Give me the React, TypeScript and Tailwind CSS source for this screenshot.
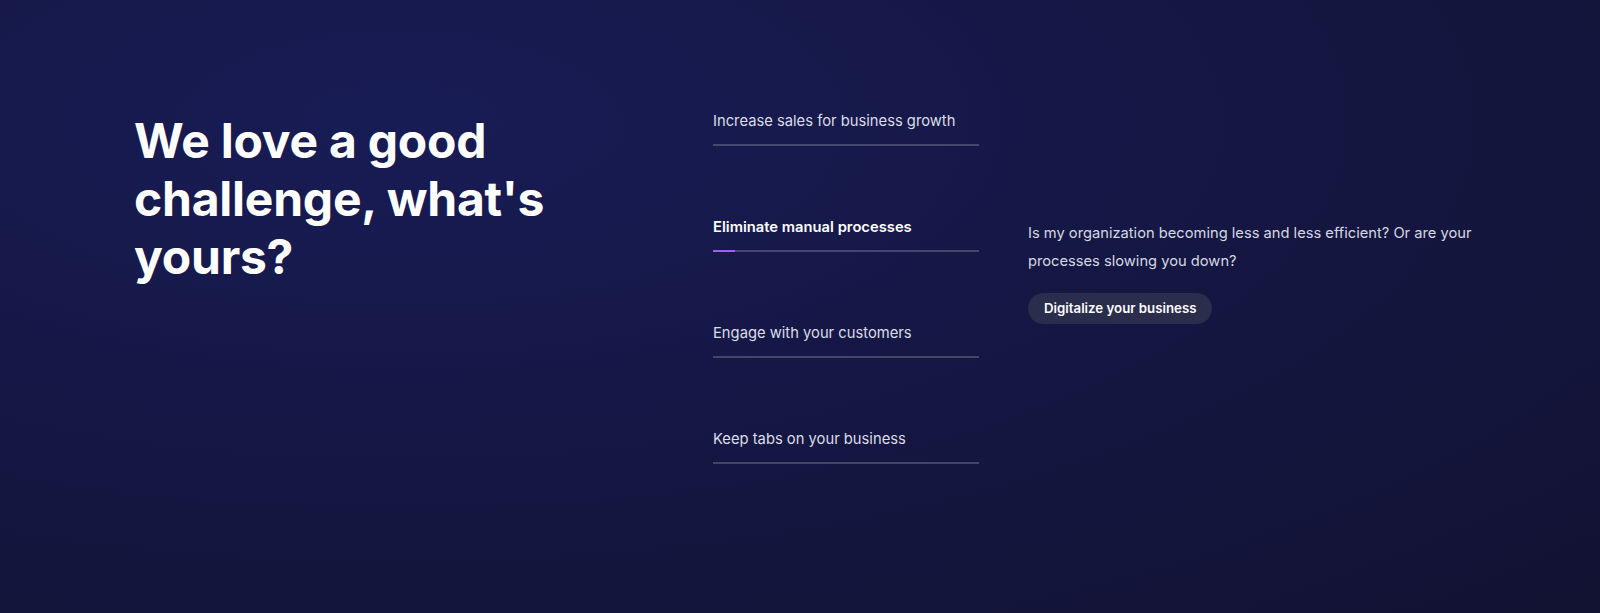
const tabs = [
  "Increase sales for business growth",
  "Eliminate manual processes",
  "Engage with your customers",
  "Keep tabs on your business",
];

const ACTIVE = 1;

export default function App() {
  return (
    <div className="h-[613px] w-full overflow-hidden bg-[radial-gradient(ellipse_at_25%_20%,#181c55_0%,#151846_40%,#121232_100%)] font-['Inter',sans-serif] text-white">
      <div className="flex items-start pl-[134px]">
        <h1 className="w-[579px] shrink-0 pt-[112px] text-[48px] font-bold leading-[58px] tracking-[-0.005em]">
          We love a good
          <br />
          challenge, what's
          <br />
          yours?
        </h1>

        <div className="flex w-[266px] shrink-0 flex-col gap-[69px] pt-[109px]">
          {tabs.map((t, i) => (
            <div key={t} className="flex flex-col">
              <span
                className={
                  i === ACTIVE
                    ? "text-[14.75px] font-semibold leading-6 text-white"
                    : "text-[14.75px] leading-6 text-[#dcdde8]"
                }
              >
                {t}
              </span>
              <div className="relative mt-[11px] h-[2px] bg-white/20">
                {i === ACTIVE && <div className="absolute left-0 top-0 h-full w-[22px] bg-[#a45cf0]" />}
              </div>
            </div>
          ))}
        </div>

        <div className="ml-[49px] w-[460px] pt-[220px]">
          <p className="text-[14.7px] leading-[27.5px] text-[#d6d7e2]">
            Is my organization becoming less and less efficient? Or are your processes slowing you down?
          </p>
          <button
            type="button"
            className="mt-[18px] h-[31px] rounded-full bg-[#2b2d4c] px-[16px] text-[13.25px] font-semibold text-white"
          >
            Digitalize your business
          </button>
        </div>
      </div>
    </div>
  );
}
